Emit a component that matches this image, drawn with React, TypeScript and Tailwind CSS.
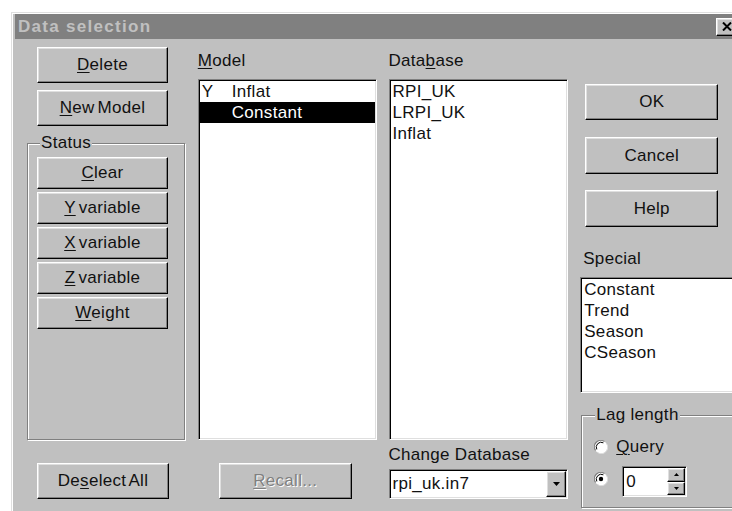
import type { ReactNode } from "react"

// Win95 style bevels
const raised =
  "border border-t-white border-l-white border-r-black border-b-black shadow-[inset_-1px_-1px_0_#808080,inset_1px_1px_0_#dfdfdf] bg-[#c0c0c0]"
const sunken =
  "border border-t-[#808080] border-l-[#808080] border-r-white border-b-white shadow-[inset_1px_1px_0_#000,inset_-1px_-1px_0_#dfdfdf] p-[1px]"
const etched = "border border-[#808080] shadow-[inset_1px_1px_0_#fff,1px_1px_0_#fff]"

function Key({ children }: { children: ReactNode }) {
  return <span className="underline underline-offset-2 decoration-1">{children}</span>
}

function Button({
  children,
  className = "",
  disabled,
}: {
  children: ReactNode
  className?: string
  disabled?: boolean
}) {
  return (
    <div
      className={`${raised} flex items-center justify-center [word-spacing:-2px] ${
        disabled ? "text-[#808080] [text-shadow:1px_1px_0_#fff]" : ""
      } ${className}`}
    >
      <span>{children}</span>
    </div>
  )
}

function GroupLabel({ children, className }: { children: ReactNode; className: string }) {
  return (
    <span className={`absolute bg-[#c0c0c0] px-[1px] leading-[20px] ${className}`}>{children}</span>
  )
}

function Radio({ checked }: { checked?: boolean }) {
  return (
    <svg width="14" height="14" viewBox="0 0 14 14" className="shrink-0">
      <circle cx="7" cy="7" r="6.5" fill="#fff" />
      <path d="M1.6 10.4 A6.3 6.3 0 0 1 10.4 1.6" stroke="#808080" strokeWidth="1.2" fill="none" />
      <path d="M2.8 9.4 A4.9 4.9 0 0 1 9.4 2.8" stroke="#000" strokeWidth="1" fill="none" />
      <path d="M12.4 3.6 A6.3 6.3 0 0 1 3.6 12.4" stroke="#dfdfdf" strokeWidth="1" fill="none" />
      {checked && <circle cx="7" cy="7" r="2.2" fill="#000" />}
    </svg>
  )
}

function Arrow({ up, size = 7 }: { up?: boolean; size?: number }) {
  const h = Math.ceil(size / 2)
  return (
    <svg width={size} height={h} viewBox={`0 0 ${size} ${h}`}>
      <polygon
        points={up ? `0,${h} ${size},${h} ${size / 2},0` : `0,0 ${size},0 ${size / 2},${h}`}
        fill="#000"
      />
    </svg>
  )
}

const database = ["RPI_UK", "LRPI_UK", "Inflat"]
const special = ["Constant", "Trend", "Season", "CSeason"]

export default function App() {
  return (
    <div className="w-[732px] h-[511px] overflow-hidden bg-white text-[17px] tracking-[0.3px] text-[#111] font-['Liberation_Sans',Arial,sans-serif]">
      <div className="ml-[11px] mt-[12px] w-[728px] h-[520px] bg-[#c0c0c0] border-t border-l border-[#dfdfdf] shadow-[inset_1px_1px_0_#fff] pt-[1px] pl-[3px]">
        {/* title bar */}
        <div className="w-[724px] h-[25px] bg-[#808080] flex items-center justify-between pl-[3px] pr-[2px]">
          <span className="font-bold text-[#c0c0c0] tracking-[1.3px] leading-none">Data selection</span>
          <div className={`${raised} w-[21px] h-[18px] flex items-center justify-center`}>
            <svg width="10" height="9" viewBox="0 0 10 9">
              <path d="M1 0.5 L9 8.5 M9 0.5 L1 8.5" stroke="#000" strokeWidth="2" />
            </svg>
          </div>
        </div>

        <div className="flex items-start">
          {/* left column */}
          <div className="ml-[12px] w-[158px] flex flex-col">
            <Button className="ml-[10px] mt-[8px] w-[131px] h-[36px]">
              <Key>D</Key>elete
            </Button>
            <Button className="ml-[10px] mt-[7px] w-[131px] h-[36px]">
              <Key>N</Key>ew Model
            </Button>
            <div className={`relative mt-[17px] h-[297px] ${etched}`}>
              <GroupLabel className="left-[12px] top-[-11px]">Status</GroupLabel>
              <div className="pl-[9px] pt-[13px] flex flex-col gap-[3px]">
                <Button className="w-[131px] h-[32px]">
                  <Key>C</Key>lear
                </Button>
                <Button className="w-[131px] h-[32px]">
                  <Key>Y</Key> variable
                </Button>
                <Button className="w-[131px] h-[32px]">
                  <Key>X</Key> variable
                </Button>
                <Button className="w-[131px] h-[32px]">
                  <Key>Z</Key> variable
                </Button>
                <Button className="w-[131px] h-[32px]">
                  <Key>W</Key>eight
                </Button>
              </div>
            </div>
            <Button className="ml-[10px] mt-[23px] w-[132px] h-[36px]">
              De<Key>s</Key>elect All
            </Button>
          </div>

          {/* model column */}
          <div className="ml-[13px] w-[179px] flex flex-col">
            <div className="mt-[12px] leading-[20px]">
              <Key>M</Key>odel
            </div>
            <div className={`mt-[8px] h-[361px] bg-white ${sunken}`}>
              <div className="flex h-[21px] items-center pl-[2px]">
                <span className="w-[30px]">Y</span>
                <span>Inflat</span>
              </div>
              <div className="flex h-[21px] items-center pl-[2px] bg-black text-white">
                <span className="w-[30px]" />
                <span>Constant</span>
              </div>
            </div>
            <Button disabled className="ml-[21px] mt-[23px] w-[133px] h-[36px]">
              <Key>R</Key>ecall...
            </Button>
          </div>

          {/* database column */}
          <div className="ml-[12px] w-[180px] flex flex-col">
            <div className="mt-[12px] leading-[20px]">
              Data<Key>b</Key>ase
            </div>
            <div className={`mt-[8px] h-[361px] bg-white ${sunken}`}>
              {database.map((d) => (
                <div key={d} className="h-[21px] flex items-center pl-[2px]">
                  {d}
                </div>
              ))}
            </div>
            <div className="mt-[5px] leading-[20px]">Change Database</div>
            <div className={`mt-[4px] h-[30px] bg-white flex items-center ${sunken}`}>
              <span className="flex-1 pl-[2px]">rpi_uk.in7</span>
              <div className={`${raised} w-[20px] h-full flex items-center justify-center`}>
                <Arrow />
              </div>
            </div>
          </div>

          {/* right column */}
          <div className="ml-[11px] w-[160px] flex flex-col">
            <Button className="ml-[6px] mt-[45px] w-[133px] h-[36px]">OK</Button>
            <Button className="ml-[6px] mt-[17px] w-[133px] h-[37px]">Cancel</Button>
            <Button className="ml-[6px] mt-[16px] w-[133px] h-[37px]">Help</Button>
            <div className="ml-[4px] mt-[22px] leading-[20px]">Special</div>
            <div className={`ml-[1px] mt-[8px] h-[116px] bg-white ${sunken}`}>
              {special.map((s) => (
                <div key={s} className="h-[21px] flex items-center pl-[2px]">
                  {s}
                </div>
              ))}
            </div>
            <div className={`relative ml-[2px] mt-[22px] h-[93px] ${etched}`}>
              <GroupLabel className="left-[13px] top-[-11px]">Lag length</GroupLabel>
              <div className="pl-[12px] pt-[19px] flex flex-col">
                <div className="h-[24px] flex items-center gap-[8px]">
                  <Radio />
                  <span>
                    <Key>Q</Key>uery
                  </span>
                </div>
                <div className="mt-[7px] h-[31px] flex items-start gap-[14px]">
                  <div className="mt-[6px]">
                    <Radio checked />
                  </div>
                  <div className={`w-[65px] h-[31px] bg-white flex items-center ${sunken}`}>
                    <span className="flex-1 pl-[2px]">0</span>
                    <div className="w-[18px] h-full flex flex-col">
                      <div className={`${raised} flex-1 flex items-center justify-center`}>
                        <Arrow up size={5} />
                      </div>
                      <div className={`${raised} flex-1 flex items-center justify-center`}>
                        <Arrow size={5} />
                      </div>
                    </div>
                  </div>
                </div>
              </div>
            </div>
          </div>
        </div>
      </div>
    </div>
  )
}
